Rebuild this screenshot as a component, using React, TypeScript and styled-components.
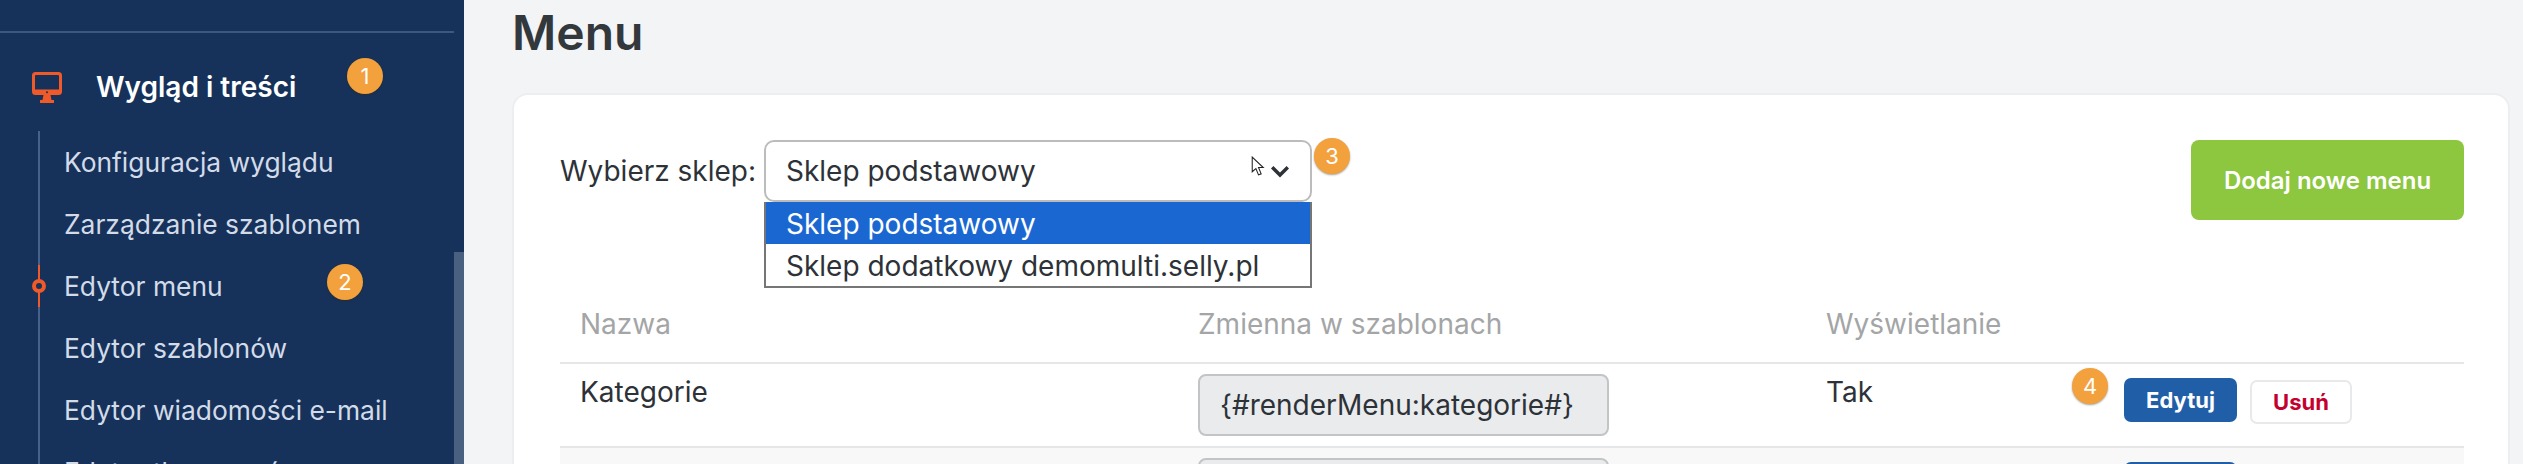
import * as React from 'react'
import styled, { createGlobalStyle } from 'styled-components'

const GlobalStyle = createGlobalStyle`
	html, body {
		margin: 0;
		padding: 0;
		background: #f3f4f6;
	}
	*, *::before, *::after {
		box-sizing: border-box;
	}
`

const Page = styled.div`
	display: flex;
	width: 2523px;
	height: 464px;
	overflow: hidden;
	background: #f3f4f6;
	font-family: Inter, "Liberation Sans", sans-serif;
	color: #2d3238;
`

const Sidebar = styled.aside`
	position: relative;
	flex: 0 0 464px;
	height: 464px;
	overflow: hidden;
	background: #16325a;
`

const Divider = styled.div`
	width: 454px;
	height: 2px;
	margin-top: 31px;
	background: #3c5880;
`

const SectionHead = styled.div`
	display: flex;
	align-items: center;
	gap: 34px;
	height: 50px;
	margin-top: 29px;
	padding-left: 32px;
	font-size: 28px;
	font-weight: 600;
	color: #ffffff;
`

const SubList = styled.ul`
	list-style: none;
	margin: 29px 0 0 38px;
	padding: 0;
	border-left: 2px solid #47618a;
`

const SubItem = styled.li<{ $active?: boolean }>`
	position: relative;
	display: flex;
	align-items: center;
	height: 62px;
	padding-left: 24px;
	font-size: 26.4px;
	color: #d3dbe9;
	&:first-child {
		margin-top: -10px;
	}
	${(p) => p.$active && `
		&::before {
			content: '';
			position: absolute;
			left: -2px;
			top: 10px;
			width: 2px;
			height: 42px;
			background: #f05a28;
		}
		&::after {
			content: '';
			position: absolute;
			left: -8px;
			top: 24px;
			width: 14px;
			height: 14px;
			border: 4px solid #f05a28;
			border-radius: 50%;
			background: #16325a;
		}
	`}
`

const ScrollThumb = styled.div`
	position: absolute;
	right: 0;
	top: 252px;
	bottom: 0;
	width: 10px;
	background: #4a6080;
`

const Badge = styled.span<{ $x: number; $y: number }>`
	position: absolute;
	left: ${(p) => p.$x}px;
	top: ${(p) => p.$y}px;
	display: flex;
	align-items: center;
	justify-content: center;
	width: 36px;
	height: 36px;
	border-radius: 50%;
	background: #f2a13c;
	box-shadow: 0 1px 2px rgba(60, 40, 0, 0.45);
	color: #ffffff;
	font-size: 22px;
	z-index: 3;
`

const Main = styled.main`
	flex: 1;
	padding: 0 13px 0 48px;
`

const Title = styled.h1`
	margin: 8px 0 0;
	height: 50px;
	font-size: 48px;
	line-height: 50px;
	font-weight: 600;
	color: #33383d;
`

const Card = styled.section`
	margin-top: 35px;
	height: 420px;
	padding: 45px 44px 0 46px;
	background: #ffffff;
	border: 2px solid #eceef0;
	border-radius: 16px;
`

const TopRow = styled.div`
	display: flex;
	align-items: flex-start;
	justify-content: space-between;
	height: 145px;
`

const ShopPicker = styled.div`
	display: flex;
	align-items: flex-start;
`

const PickerLabel = styled.label`
	flex: 0 0 204px;
	font-size: 28px;
	line-height: 62px;
`

const SelectWrap = styled.div`
	position: relative;
	width: 548px;
`

const SelectBox = styled.div`
	display: flex;
	align-items: center;
	justify-content: space-between;
	height: 62px;
	padding: 0 20px 0 20px;
	border: 2px solid #bcbcbc;
	border-radius: 10px;
	font-size: 28px;
`

const OptionList = styled.div`
	position: absolute;
	top: 62px;
	left: 0;
	right: 0;
	border: 2px solid #767676;
	border-top: 0;
	background: #ffffff;
`

const Option = styled.div<{ $selected?: boolean }>`
	height: 42px;
	padding-left: 20px;
	font-size: 28px;
	line-height: 44px;
	background: ${(p) => (p.$selected ? '#1b67d2' : '#ffffff')};
	color: ${(p) => (p.$selected ? '#ffffff' : '#2d3238')};
`

const AddButton = styled.button`
	width: 273px;
	height: 80px;
	border: 0;
	border-radius: 8px;
	background: #8dc63f;
	color: #ffffff;
	font-family: Inter, "Liberation Sans", sans-serif;
	font-size: 24px;
	font-weight: 600;
`

const TableRow = styled.div<{ $head?: boolean; $shaded?: boolean }>`
	display: grid;
	grid-template-columns: 618px 628px 298px 1fr;
	height: ${(p) => (p.$head ? '79px' : '84px')};
	padding-left: 20px;
	border-bottom: 2px solid #e4e6e8;
	background: ${(p) => (p.$shaded ? '#f8f8f8' : '#ffffff')};
	font-size: 28px;
	${(p) => p.$head && `
		align-items: center;
		color: #a3a5a6;
	`}
`

const Cell = styled.div`
	padding-top: 10px;
	line-height: 36px;
`

const VarField = styled.div`
	display: flex;
	align-items: center;
	width: 411px;
	height: 62px;
	margin-top: 10px;
	padding-left: 20px;
	border: 2px solid #c2c4c6;
	border-radius: 8px;
	background: #e9ebed;
`

const Actions = styled.div`
	display: flex;
	align-items: flex-start;
	gap: 13px;
	padding-top: 14px;
`

const EditButton = styled.button`
	width: 113px;
	height: 44px;
	border: 0;
	border-radius: 7px;
	background: #215ea8;
	color: #ffffff;
	font-family: Inter, "Liberation Sans", sans-serif;
	font-size: 22px;
	font-weight: 700;
`

const DeleteButton = styled.button`
	width: 102px;
	height: 44px;
	margin-top: 2px;
	border: 2px solid #e8e9ea;
	border-radius: 7px;
	background: #ffffff;
	color: #c4002f;
	font-family: Inter, "Liberation Sans", sans-serif;
	font-size: 22px;
	font-weight: 700;
`

const Cursor = styled.svg`
	position: absolute;
	left: 1251px;
	top: 156px;
	z-index: 3;
`

const MonitorIcon = () => (
	<svg width="30" height="31" viewBox="0 0 30 31">
		<path fill="#f05a28" fillRule="evenodd" d="M3.5 0h23A3.5 3.5 0 0 1 30 3.5v16a3.5 3.5 0 0 1-3.5 3.500h-23A3.500 3.500 0 0 1 0 19.500v-16A3.500 3.500 0 0 1 3.500 0zM4 3a1 1 0 0 0-1 1v13.500h24V4a1 1 0 0 0-1-1z" />
		<path fill="#f05a28" d="M11.500 23h7l1 5h2.500v3H8v-3h2.500z" />
		<circle cx="15" cy="20.300" r="1" fill="#16325a" />
	</svg>
)

const Chevron = () => (
	<svg width="20" height="13" viewBox="0 0 20 13">
		<path d="M2.200 2.200L10 10l7.800-7.800" fill="none" stroke="#2d3238" strokeWidth="3.400" />
	</svg>
)

const subItems = [
	'Konfiguracja wyglądu',
	'Zarządzanie szablonem',
	'Edytor menu',
	'Edytor szablonów',
	'Edytor wiadomości e-mail',
	'Edytor tłumaczeń',
]

export default function App() {
	return (
		<>
			<GlobalStyle />
			<Page>
				<Sidebar>
					<Divider />
					<SectionHead>
						<MonitorIcon />
						Wygląd i treści
					</SectionHead>
					<SubList>
						{subItems.map((item) => (
							<SubItem key={item} $active={item === 'Edytor menu'}>
								{item}
							</SubItem>
						))}
					</SubList>
					<ScrollThumb />
				</Sidebar>
				<Main>
					<Title>Menu</Title>
					<Card>
						<TopRow>
							<ShopPicker>
								<PickerLabel>Wybierz sklep:</PickerLabel>
								<SelectWrap>
									<SelectBox>
										Sklep podstawowy
										<Chevron />
									</SelectBox>
									<OptionList>
										<Option $selected>Sklep podstawowy</Option>
										<Option>Sklep dodatkowy demomulti.selly.pl</Option>
									</OptionList>
								</SelectWrap>
							</ShopPicker>
							<AddButton>Dodaj nowe menu</AddButton>
						</TopRow>
						<TableRow $head>
							<div>Nazwa</div>
							<div>Zmienna w szablonach</div>
							<div>Wyświetlanie</div>
							<div />
						</TableRow>
						<TableRow>
							<Cell>Kategorie</Cell>
							<VarField>{'{#renderMenu:kategorie#}'}</VarField>
							<Cell>Tak</Cell>
							<Actions>
								<EditButton>Edytuj</EditButton>
								<DeleteButton>Usuń</DeleteButton>
							</Actions>
						</TableRow>
						<TableRow $shaded>
							<Cell />
							<VarField />
							<Cell />
							<Actions>
								<EditButton />
							</Actions>
						</TableRow>
					</Card>
				</Main>
				<Badge $x={347} $y={58}>1</Badge>
				<Badge $x={327} $y={264}>2</Badge>
				<Badge $x={1314} $y={138}>3</Badge>
				<Badge $x={2072} $y={368}>4</Badge>
				<Cursor width="14" height="21" viewBox="0 0 13 20">
					<path d="M1 1v14l3.500-3 2.500 6 2.500-1-2.500-6h4.500z" fill="#ffffff" stroke="#222222" strokeWidth="1" />
				</Cursor>
			</Page>
		</>
	)
}
